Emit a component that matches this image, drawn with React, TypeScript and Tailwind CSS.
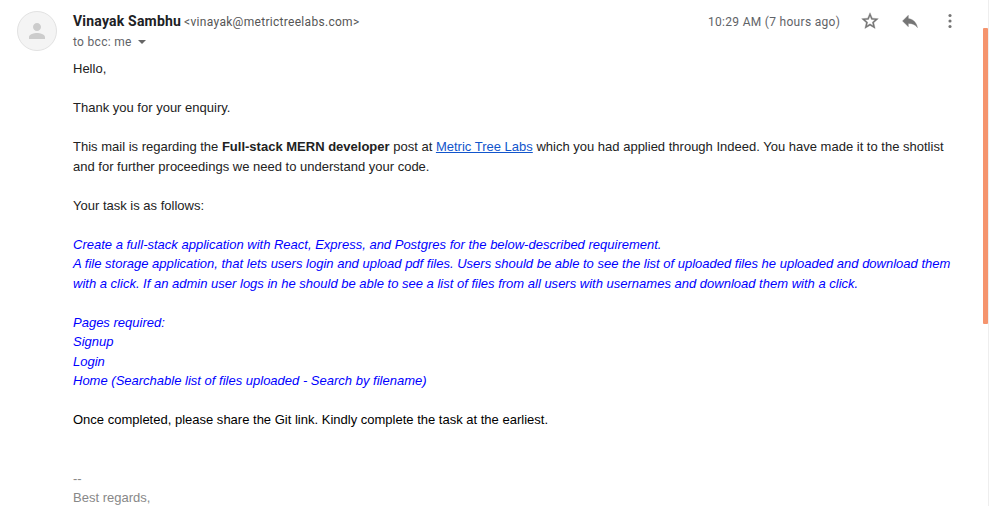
import React from "react";

function Header() {
  return (
    <header className="flex h-[59px] pt-[11px] font-[Roboto,sans-serif]">
      <div className="ml-[17px] flex size-10 shrink-0 items-center justify-center rounded-full border border-[#e2e2e2] bg-[#f4f4f4]">
        <svg width="24" height="24" viewBox="0 0 24 24" fill="#cccccc">
          <path d="M12 12c2.210 0 4-1.790 4-4s-1.790-4-4-4-4 1.790-4 4 1.790 4 4 4zm0 2c-2.670 0-8 1.340-8 4v2h16v-2c0-2.660-5.330-4-8-4z" />
        </svg>
      </div>
      <div className="ml-4 w-[635px] shrink-0">
        <div className="flex h-5 items-center whitespace-nowrap">
          <span className="text-[14px] font-bold tracking-[0.2px] text-[#202124]">Vinayak Sambhu</span>
          <span className="ml-[3px] pt-px text-[12px] tracking-[0.3px] text-[#555555]">&lt;vinayak@metrictreelabs.com&gt;</span>
        </div>
        <div className="flex h-5 items-center pt-px text-[12px] tracking-[0.3px] text-[#5f6368]">
          to bcc: me
          <span className="ml-[6px] border-x-4 border-t-4 border-x-transparent border-t-[#666666]" />
        </div>
      </div>
      <div className="flex h-5 items-center">
        <span className="w-[152px] pt-px text-[12px] tracking-[0.3px] text-[#5f6368]">10:29 AM (7 hours ago)</span>
        <svg width="20" height="20" viewBox="0 0 24 24" fill="#757575" stroke="#757575" strokeWidth="0.4">
          <path d="M22 9.240l-7.190-.62L12 2 9.190 8.630 2 9.240l5.460 4.730L5.820 21 12 17.270 18.180 21l-1.630-7.030L22 9.240zM12 15.400l-3.760 2.270 1-4.280-3.320-2.880 4.380-.38L12 6.100l1.710 4.040 4.380.38-3.320 2.880 1 4.280L12 15.400z" />
        </svg>
        <svg className="ml-5" width="20" height="20" viewBox="0 0 24 24" fill="#757575" stroke="#757575" strokeWidth="0.4">
          <path d="M10 9V5l-7 7 7 7v-4.100c5 0 8.500 1.600 11 5.100-1-5-4-10-11-11z" />
        </svg>
        <svg className="ml-5" width="20" height="20" viewBox="0 0 20 20" fill="#757575">
          <circle cx="10" cy="4.500" r="1.550" />
          <circle cx="10" cy="10" r="1.550" />
          <circle cx="10" cy="15.500" r="1.550" />
        </svg>
      </div>
    </header>
  );
}

export default function App() {
  return (
    <div className="flex h-[506px] w-[994px] overflow-hidden bg-white">
      <main className="w-[983px] shrink-0">
        <Header />
        <article className="ml-[73px] whitespace-nowrap font-['Liberation_Sans',Arial,sans-serif] text-[13px] leading-[19.5px] tracking-[0.003px] text-[#222222]">
          <p>Hello,</p>
          <p className="mt-[19.5px]">Thank you for your enquiry.</p>
          <p className="mt-[19.5px]">
            This mail is regarding the <b>Full-stack MERN developer</b> post at{" "}
            <a className="text-[#1155cc] underline">Metric Tree Labs</a> which you had applied through Indeed. You have made it to the shotlist
            <br />
            and for further proceedings we need to understand your code.
          </p>
          <p className="mt-[19.5px]">Your task is as follows:</p>
          <div className="mt-[19.5px] italic text-[#0000ff]">
            <p>Create a full-stack application with React, Express, and Postgres for the below-described requirement.</p>
            <p>
              A file storage application, that lets users login and upload pdf files. Users should be able to see the list of uploaded files he uploaded and download them
              <br />
              with a click. If an admin user logs in he should be able to see a list of files from all users with usernames and download them with a click.
            </p>
            <p className="mt-[19.5px]">Pages required:</p>
            <p>Signup</p>
            <p>Login</p>
            <p>Home (Searchable list of files uploaded - Search by filename)</p>
          </div>
          <p className="mt-[19.5px] text-black">Once completed, please share the Git link. Kindly complete the task at the earliest.</p>
          <div className="mt-[39px] text-[#888888]">
            <p>--</p>
            <p>Best regards,</p>
          </div>
        </article>
      </main>
      <aside className="w-[6px] border-r border-[#eeeeee] pt-7">
        <div className="h-[296px] w-[5px] rounded-[1px] bg-[#f5946e]" />
      </aside>
    </div>
  );
}
